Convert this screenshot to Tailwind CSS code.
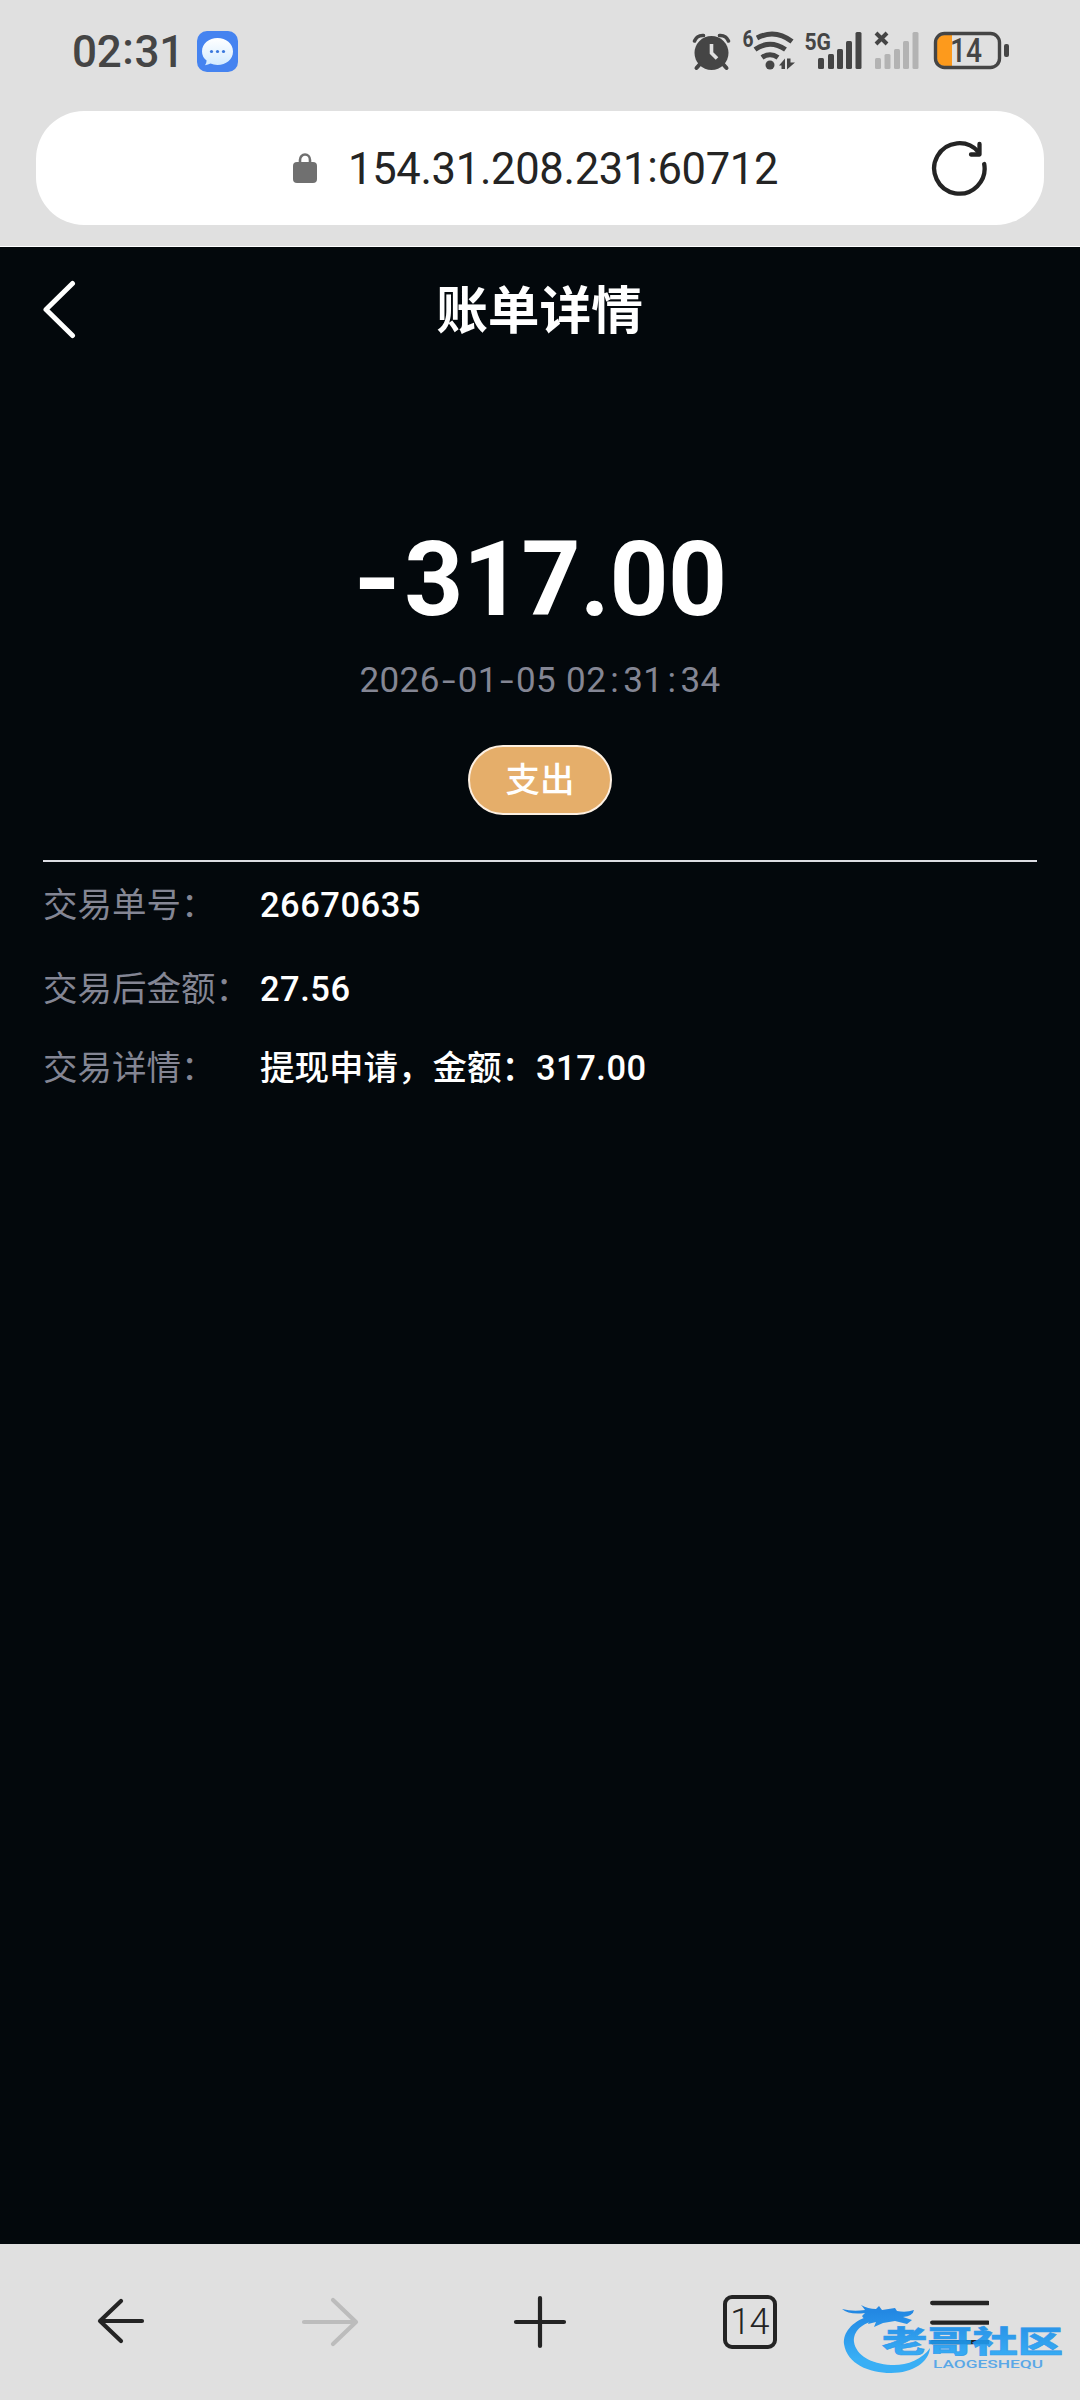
<!DOCTYPE html>
<html lang="zh-CN">
<head>
<meta charset="utf-8">
<title>账单详情</title>
<script src="https://cdn.jsdelivr.net/npm/@tailwindcss/browser@4"></script>
</head>
<body class="w-[1080px] h-[2400px] overflow-hidden bg-[#03080c] font-[Roboto,'Noto_Sans_CJK_SC',sans-serif]">
<div class="relative flex flex-col w-[1080px] h-[2400px]">
  <header class="h-[247px] shrink-0 bg-[#e0e0e0] border-b border-white flex flex-col">
    <div class="h-[111px] pt-[1px] flex items-start justify-between text-[#454545]">
      <div class="flex items-center h-[100px] pl-[72px]">
        <span class="w-[125px] text-[44px] font-medium leading-none flex pt-[2px] tracking-[-0.300px]">02<span class="w-[13px] text-center -mt-[3px]">:</span>31</span>
        <svg class="w-[41px] h-[41px]" viewBox="0 0 41 41"><defs><linearGradient id="bub" x1="0" y1="0" x2="0" y2="1"><stop offset="0" stop-color="#fff"/><stop offset="1" stop-color="#d3ebff"/></linearGradient></defs><rect width="41" height="41" rx="10" fill="#4583f0"/><path d="M20.500 7C29 7 36 12.500 36 20.500S29 34 20.500 34Q16.500 34 13.500 32.600Q11 34 8 34.200Q9.600 32 9.600 29.500Q5 26 5 20.500C5 12.500 12 7 20.500 7Z" fill="url(#bub)"/><g fill="#3a78dd"><circle cx="14.500" cy="20.500" r="1.600"/><circle cx="20.500" cy="20.500" r="1.600"/><circle cx="26.500" cy="20.500" r="1.600"/></g></svg>
      </div>
      <svg class="w-[340px] h-[70px] mt-[14px] mr-[60px]" viewBox="0 0 340 70" fill="#454545">
        <circle cx="31.500" cy="38" r="17"/>
        <path d="M14.500 26Q17 20 23.500 20.500M48.500 26Q46 20 39.500 20.500" fill="none" stroke="#454545" stroke-width="3.600" stroke-linecap="round"/><path d="M20 49L16.500 53M43 49L46.500 53" fill="none" stroke="#454545" stroke-width="4" stroke-linecap="round"/>
        <path d="M31.500 29V38L37 43.500" fill="none" stroke="#e0e0e0" stroke-width="3.600"/>
        <text x="62.500" y="31.500" font-size="23" font-weight="700" textLength="11" lengthAdjust="spacingAndGlyphs">6</text>
        <g fill="none" stroke="#454545" stroke-width="5"><path d="M77 23Q95 13.500 112 26.500"/><path d="M75 34.500Q90 24 105.500 34.500"/><path d="M82 42.500Q90 37 98 42.500"/></g>
        <circle cx="90" cy="50" r="4.500"/>
        <path d="M99 50.500L105 43.500V54H101.500V50.500ZM107 43.500H110.500V47.500H115L107 54.500Z"/>
        <text x="124.500" y="35" font-size="24.500" font-weight="700" textLength="26.500" lengthAdjust="spacingAndGlyphs">5G</text>
        <g><rect x="138" y="43" width="6" height="11" rx="1.500"/><rect x="148" y="39" width="6" height="15" rx="1.500"/><rect x="157" y="34" width="6" height="20" rx="1.500"/><rect x="166" y="26" width="6" height="28" rx="1.500"/><rect x="175.500" y="17" width="6" height="37" rx="1.500"/></g>
        <path d="M196 18L207 29M207 18L196 29" stroke="#454545" stroke-width="4"/>
        <g fill="#b3b3b3"><rect x="195" y="43" width="6" height="11" rx="1.500"/><rect x="204.500" y="39" width="6" height="15" rx="1.500"/><rect x="214" y="34" width="6" height="20" rx="1.500"/><rect x="223" y="26" width="6" height="28" rx="1.500"/><rect x="232.500" y="17" width="6" height="37" rx="1.500"/></g>
        <path d="M272 20H265Q257 20 257 28V43Q257 51 265 51H272Z" fill="#fd9a1c"/>
        <rect x="255.500" y="18.500" width="64" height="34" rx="9" fill="none" stroke="#454545" stroke-width="3.400"/>
        <rect x="324" y="29" width="5" height="13" rx="2"/>
        <text x="270" y="47" font-size="33" font-weight="500" textLength="32" lengthAdjust="spacingAndGlyphs">14</text>
      </svg>
    </div>
    <div class="mx-[36px] h-[114px] rounded-[48px] bg-white flex items-center text-[#242424]">
      <svg class="ml-[257px] w-[24px] h-[30px]" viewBox="0 0 24 30"><path d="M7 11V7A5 5.500 0 0 1 17 7V11" fill="none" stroke="#707070" stroke-width="2.600"/><rect y="9" width="24" height="21" rx="4" fill="#707070"/></svg>
      <span class="ml-[31px] w-[430px] pt-[3px] text-[43.500px] leading-none tracking-[-0.300px] flex items-center">154.31.208.231<span class="w-[14px] text-center -mt-[4px]">:</span>60712</span>
      <svg class="ml-[151px] w-[60px] h-[60px]" viewBox="0 0 60 60" fill="none" stroke="#242424" stroke-width="4.300" stroke-linecap="round" stroke-linejoin="round"><path d="M55.200 26A25.200 25.200 0 1 1 49.500 14"/><path d="M50.500 6V16.500H42"/></svg>
    </div>
  </header>

  <main class="flex-1 flex flex-col text-white">
    <div class="h-[126px] flex items-center">
      <svg class="w-[80px] h-[60px] ml-[20px]" viewBox="0 0 80 60" fill="none" stroke="#fff" stroke-width="5" stroke-linecap="round" stroke-linejoin="round"><path d="M52.500 3.500L26 29.500L52.500 55.500"/></svg>
      <h1 class="flex-1 text-center mr-[101px] pt-[3px] text-[51.700px] leading-none font-bold">账单详情</h1>
    </div>
    <section class="flex flex-col items-center">
      <div class="mt-[155px] h-[104px] text-[103px] leading-[104px] tracking-[-0.500px] font-bold flex"><span class="w-[51px]"><span class="inline-block origin-left scale-x-120">-</span></span><span>317.00</span></div>
      <div class="mt-[29px] h-[40px] text-[35px] leading-[40px] tracking-[0.400px] text-[#848694] flex"><span>2026</span><span class="w-[18px] text-center scale-x-140">-</span><span>01</span><span class="w-[18px] text-center scale-x-140">-</span><span>05</span><span class="w-[10px]">&nbsp;</span><span>02</span><span class="w-[17px] text-center">:</span><span>31</span><span class="w-[17px] text-center">:</span><span>34</span></div>
      <div class="mt-[44px] w-[144px] h-[70px] rounded-full bg-[#e5ae6a] border-2 border-[#fdf0e2] flex items-center justify-center text-[34.500px] leading-none font-medium">支出</div>
    </section>
    <section class="mt-[45px] mx-[43px] border-t-2 border-[#dcdde3] text-[34.500px] font-medium">
      <div class="mt-[3px] h-[81px] flex items-center"><span class="w-[217px] text-[#848694] font-normal">交易单号：</span><span class="tracking-[0.500px]">26670635</span></div>
      <div class="mt-[3px] h-[81px] flex items-center"><span class="w-[217px] text-[#848694] font-normal">交易后金额：</span><span class="tracking-[0.500px]">27.56</span></div>
      <div class="mt-[1px] h-[76px] flex items-center"><span class="w-[217px] text-[#848694] font-normal">交易详情：</span><span>提现申请，金额：<span class="tracking-[0.500px]">317.00</span></span></div>
    </section>
  </main>

  <footer class="h-[156px] shrink-0 bg-[#e0e0e0] grid grid-cols-5 items-center justify-items-center px-[16px] text-[#242424]">
    <svg class="w-[60px] h-[60px]" viewBox="0 0 60 60" fill="none" stroke="currentColor" stroke-width="4.200" stroke-linecap="round" stroke-linejoin="round"><path d="M51 29H9M30 9L9 29L30 49"/></svg>
    <svg class="w-[60px] h-[60px]" viewBox="0 0 60 60" fill="none" stroke="#bcbcbc" stroke-width="4.200" stroke-linecap="round" stroke-linejoin="round"><path d="M4 30H56M33 8L56 30L33 52"/></svg>
    <svg class="w-[60px] h-[60px]" viewBox="0 0 60 60" fill="none" stroke="currentColor" stroke-width="4.200" stroke-linecap="round"><path d="M6 30H54M30 6V54"/></svg>
    <div class="w-[54px] h-[54px] rounded-[9px] border-4 border-[#242424] flex items-center justify-center text-[36px] leading-none tracking-[-0.500px] font-light">14</div>
    <svg class="w-[60px] h-[60px]" viewBox="0 0 60 60" fill="none" stroke="currentColor" stroke-width="4.300" stroke-linecap="round"><path d="M3.200 11H58.800M3.200 30.600H58.800M3.200 50.200H58.800"/></svg>
  </footer>

  <svg class="absolute left-[835px] top-[2295px] w-[245px] h-[85px] opacity-90" viewBox="0 0 245 85">
    <defs><linearGradient id="wm" x1="0" y1="0" x2="0" y2="85" gradientUnits="userSpaceOnUse"><stop offset="0.200" stop-color="#0f7fe4"/><stop offset="0.750" stop-color="#27aaf8"/></linearGradient></defs>
    <path d="M34 21C16 27 8 38 9 49C12 69 34 78 56 78C78 78 94 67 95 53C87 65 70 71 56 70C36 69 21 60 19 47C18 36 27 28 42 25Z" fill="url(#wm)"/>
    <path d="M7 14Q18 17 30 15Q28 12 26 10Q33 14 41 14L44 11L47 15L60 13L62 16Q71 18 79 15Q78 21 68 22L77 25L72 29L60 26L48 28L39 32L41 27L33 29L35 24Q29 25 27 21L30 18Q14 20 7 14Z" fill="url(#wm)"/>
    <text x="47" y="57" font-size="30" font-weight="900" fill="url(#wm)" textLength="181" lengthAdjust="spacingAndGlyphs" stroke="#1d93ec" stroke-width="0.600">老哥社区</text>
    <text x="98" y="72.500" font-size="10.500" font-weight="500" fill="#4ca2e8" textLength="110" lengthAdjust="spacingAndGlyphs">LAOGESHEQU</text>
  </svg>
</div>
</body>
</html>
